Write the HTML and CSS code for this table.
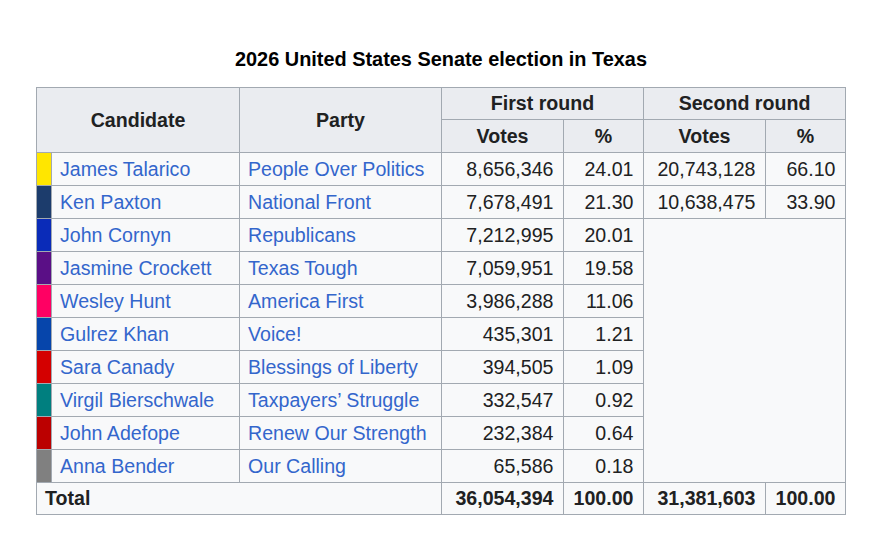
FILE: index.html
```html
<!DOCTYPE html>
<html lang="en">
<head>
<meta charset="utf-8">
<title>2026 United States Senate election in Texas</title>
<link rel="stylesheet" href="styles.css">
</head>
<body>
<main class="page">
<table class="wikitable">
  <caption>2026 United States Senate election in Texas</caption>
  <colgroup>
    <col class="c-bar">
    <col class="c-cand">
    <col class="c-party">
    <col class="c-votes">
    <col class="c-pct">
    <col class="c-votes">
    <col class="c-pct">
  </colgroup>
  <thead>
    <tr class="h1">
      <th colspan="2" rowspan="2">Candidate</th>
      <th rowspan="2">Party</th>
      <th colspan="2">First round</th>
      <th colspan="2">Second round</th>
    </tr>
    <tr>
      <th>Votes</th>
      <th>%</th>
      <th>Votes</th>
      <th>%</th>
    </tr>
  </thead>
  <tbody>
    <tr>
      <td class="bar" style="background:#ffe600"></td>
      <td><a href="#">James Talarico</a></td>
      <td><a href="#">People Over Politics</a></td>
      <td class="num">8,656,346</td>
      <td class="num">24.01</td>
      <td class="num">20,743,128</td>
      <td class="num">66.10</td>
    </tr>
    <tr>
      <td class="bar" style="background:#1c3c6c"></td>
      <td><a href="#">Ken Paxton</a></td>
      <td><a href="#">National Front</a></td>
      <td class="num">7,678,491</td>
      <td class="num">21.30</td>
      <td class="num">10,638,475</td>
      <td class="num">33.90</td>
    </tr>
    <tr>
      <td class="bar" style="background:#0a2bb8"></td>
      <td><a href="#">John Cornyn</a></td>
      <td><a href="#">Republicans</a></td>
      <td class="num">7,212,995</td>
      <td class="num">20.01</td>
      <td class="empty" colspan="2" rowspan="8"></td>
    </tr>
    <tr>
      <td class="bar" style="background:#5a0f86"></td>
      <td><a href="#">Jasmine Crockett</a></td>
      <td><a href="#">Texas Tough</a></td>
      <td class="num">7,059,951</td>
      <td class="num">19.58</td>
    </tr>
    <tr>
      <td class="bar" style="background:#ff0063"></td>
      <td><a href="#">Wesley Hunt</a></td>
      <td><a href="#">America First</a></td>
      <td class="num">3,986,288</td>
      <td class="num">11.06</td>
    </tr>
    <tr>
      <td class="bar" style="background:#0645ab"></td>
      <td><a href="#">Gulrez Khan</a></td>
      <td><a href="#">Voice!</a></td>
      <td class="num">435,301</td>
      <td class="num">1.21</td>
    </tr>
    <tr>
      <td class="bar" style="background:#d40000"></td>
      <td><a href="#">Sara Canady</a></td>
      <td><a href="#">Blessings of Liberty</a></td>
      <td class="num">394,505</td>
      <td class="num">1.09</td>
    </tr>
    <tr>
      <td class="bar" style="background:#007f7f"></td>
      <td><a href="#">Virgil Bierschwale</a></td>
      <td><a href="#">Taxpayers’ Struggle</a></td>
      <td class="num">332,547</td>
      <td class="num">0.92</td>
    </tr>
    <tr>
      <td class="bar" style="background:#bb0000"></td>
      <td><a href="#">John Adefope</a></td>
      <td><a href="#">Renew Our Strength</a></td>
      <td class="num">232,384</td>
      <td class="num">0.64</td>
    </tr>
    <tr>
      <td class="bar" style="background:#808080"></td>
      <td><a href="#">Anna Bender</a></td>
      <td><a href="#">Our Calling</a></td>
      <td class="num">65,586</td>
      <td class="num">0.18</td>
    </tr>
  </tbody>
  <tfoot>
    <tr class="total">
      <th colspan="3" class="label">Total</th>
      <th class="num">36,054,394</th>
      <th class="num">100.00</th>
      <th class="num">31,381,603</th>
      <th class="num">100.00</th>
    </tr>
  </tfoot>
</table>
</main>
</body>
</html>
```

FILE: styles.css
```css
html, body {
  margin: 0;
  padding: 0;
  background: #ffffff;
}

.page {
  padding: 47px 0 0 36px;
  font-family: "Liberation Sans", Arial, Helvetica, sans-serif;
  font-size: 19.6px;
  color: #202122;
}

.wikitable {
  border-collapse: collapse;
  table-layout: fixed;
  width: 810px;
  background: #f8f9fa;
  color: #202122;
  border: 1px solid #a2a9b1;
}

.wikitable caption {
  font-weight: bold;
  font-size: 19.9px;
  line-height: 24px;
  color: #000000;
  padding-bottom: 16px;
  background: #ffffff;
}

.c-bar { width: 15px; }
.c-cand { width: 188px; }
.c-party { width: 202px; }
.c-votes { width: 122px; }
.c-pct { width: 80px; }

.wikitable th,
.wikitable td {
  border: 1px solid #a2a9b1;
  padding: 4px 8px;
  line-height: 24px;
  white-space: nowrap;
}

.wikitable th {
  background: #eaecf0;
  font-weight: bold;
  text-align: center;
}

.wikitable .h1 th {
  line-height: 23px;
}

.wikitable td {
  text-align: left;
}

.wikitable td.bar {
  padding: 0;
}

.wikitable .num {
  text-align: right;
  padding-right: 9.5px;
}

.wikitable a {
  color: #3366cc;
  text-decoration: none;
}

.wikitable .total th {
  background: #f8f9fa;
  line-height: 23px;
}

.wikitable .total th.label {
  text-align: left;
}
```
